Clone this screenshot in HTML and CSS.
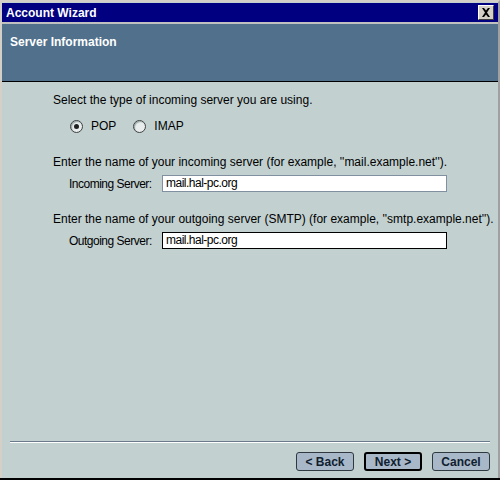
FILE: index.html
```html
<!DOCTYPE html>
<html lang="en">
<head>
    <meta charset="UTF-8">
    <title>Account Wizard</title>
    <link rel="stylesheet" href="styles.css">
</head>
<body>
    <div class="window">
        <div class="titlebar">
            <span class="title">Account Wizard</span>
            <span class="close">
                <svg width="10" height="9" viewBox="0 0 10 9">
                    <path d="M1 0h2l2 2.5 2-2.5h2l-3 4.5 3 4.5h-2l-2-2.5-2 2.5h-2l3-4.5z" fill="#000"/>
                </svg>
            </span>
        </div>

        <div class="banner">Server Information</div>

        <main class="content">
            <p class="prompt">Select the type of incoming server you are using.</p>
            <div class="radios">
                <label class="radio"><span class="dot checked"></span>POP</label>
                <label class="radio"><span class="dot"></span>IMAP</label>
            </div>

            <p class="prompt second">Enter the name of your incoming server (for example, ''mail.example.net'').</p>
            <div class="field">
                <span class="field-label">Incoming Server:</span>
                <span class="input">mail.hal-pc.org</span>
            </div>

            <p class="prompt third">Enter the name of your outgoing server (SMTP) (for example, ''smtp.example.net'').</p>
            <div class="field">
                <span class="field-label">Outgoing Server:</span>
                <span class="input focused">mail.hal-pc.org</span>
            </div>
        </main>

        <div class="footer">
            <hr class="divider">
            <div class="buttons">
                <button class="btn">&lt; Back</button>
                <button class="btn default">Next &gt;</button>
                <button class="btn">Cancel</button>
            </div>
        </div>
    </div>
</body>
</html>
```

FILE: styles.css
```css
body {
    margin: 0;
    padding: 0;
    font-family: "Liberation Sans", Arial, sans-serif;
    font-size: 12px;
    color: #000;
    background: #000;
}
.window {
    width: 500px;
    height: 478px;
    display: flex;
    flex-direction: column;
    background-color: #c2d0d0;
    border-top: 2px solid #d4d0c8;
    border-left: 2px solid #d4d0c8;
    border-right: 2px solid #a0a0a0;
    box-sizing: border-box;
}
.titlebar {
    height: 19px;
    margin-top: 1px;
    background-color: #000080;
    color: white;
    display: flex;
    align-items: center;
    justify-content: space-between;
    padding: 0 4px 0 4px;
    border-bottom: 2px solid #c0c0c0;
}
.title {
    font-weight: bold;
    font-size: 12px;
}
.close {
    width: 14px;
    height: 13px;
    background: #d4d0c8;
    border: 1px solid;
    border-color: #fff #404040 #404040 #fff;
    display: flex;
    align-items: center;
    justify-content: center;
}
.banner {
    background-color: #50708c;
    color: white;
    font-weight: bold;
    font-size: 12px;
    height: 58px;
    padding: 11px 0 0 8px;
    box-sizing: border-box;
    border-bottom: 1px solid #000;
}
.content {
    flex: 1;
    padding: 11px 0 0 51px;
}
.prompt {
    margin: 0;
    line-height: 14px;
}
.radios {
    display: flex;
    gap: 17px;
    margin: 12px 0 0 17px;
}
.radio {
    display: flex;
    align-items: center;
    gap: 8px;
}
.dot {
    width: 11px;
    height: 11px;
    border-radius: 50%;
    border: 1px solid #404040;
    background: #e8ecec;
    box-shadow: inset 1px 1px 1px #9aa;
    position: relative;
}
.dot.checked::after {
    content: "";
    position: absolute;
    left: 3px;
    top: 3px;
    width: 5px;
    height: 5px;
    border-radius: 50%;
    background: #202020;
}
.second {
    margin-top: 22px;
}
.third {
    margin-top: 20px;
}
.field {
    display: flex;
    align-items: center;
    margin: 6px 0 0 16px;
    letter-spacing: -0.5px;
}
.field-label {
    width: 93px;
}
.input {
    width: 280px;
    height: 15px;
    line-height: 15px;
    padding-left: 3px;
    background: #fff;
    border: 1px solid #8090a0;
}
.input.focused {
    border-color: #000;
}
.footer {
    padding: 0 8px 7px 8px;
}
.divider {
    margin: 0 0 9px 0;
    border: none;
    border-top: 1px solid #6a7a8a;
    border-bottom: 1px solid #fff;
}
.buttons {
    display: flex;
    justify-content: flex-end;
    gap: 10px;
}
.btn {
    font-family: "Liberation Sans", Arial, sans-serif;
    font-size: 12px;
    font-weight: bold;
    color: #102030;
    background: #a8b8c8;
    border: 1px solid #303840;
    border-radius: 3px;
    height: 19px;
    width: 58px;
    padding: 0;
}
.btn.default {
    border-width: 2px;
    border-color: #000;
}
```
